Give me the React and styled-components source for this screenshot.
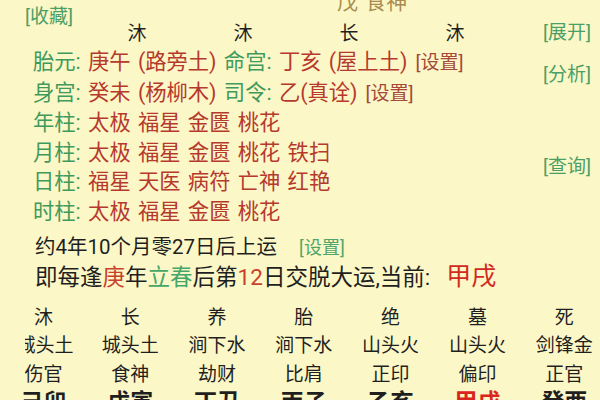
import React from 'react'
import styled, { createGlobalStyle } from 'styled-components'

const GlobalStyle = createGlobalStyle`
  html, body {
    margin: 0;
    padding: 0;
    background: #fcf7c6;
  }
  body {
    font-family: Roboto, "Noto Sans CJK SC", sans-serif;
    color: #1f1f1f;
  }
`

const Page = styled.div`
  width: 600px;
  height: 400px;
  overflow: hidden;
  background: #fcf7c6;
  display: flex;
  flex-direction: column;
`

const TopArea = styled.div`
  display: flex;
`

const Main = styled.div`
  flex: 1;
  display: flex;
  flex-direction: column;
`

const Side = styled.div`
  width: 72px;
  padding-right: 9px;
  display: flex;
  flex-direction: column;
  align-items: flex-end;
`

const Link = styled.span`
  font-size: ${p => p.$size || 19}px;
  line-height: 20px;
  color: ${p => p.$tone || '#4a9f66'};
  margin-top: ${p => p.$top || 0}px;
  margin-left: ${p => p.$left || 0}px;
  white-space: nowrap;
`

const Header = styled.div`
  height: 24px;
  display: grid;
  grid-template-columns: 312px auto;
  align-items: start;
  padding-left: 25px;
`

const TenGod = styled.span`
  font-size: 21px;
  line-height: 20px;
  margin-top: -8px;
  color: #a98c4e;
  white-space: nowrap;
  word-spacing: 2px;
`

const MarksRow = styled.div`
  display: grid;
  grid-template-columns: repeat(4, 106px);
  padding-left: 84px;
  justify-items: center;
  font-size: 19px;
  line-height: 20px;
  margin-bottom: 3px;
`

const InfoRow = styled.div`
  padding-left: 33px;
  font-size: 21.3px;
  line-height: 29.6px;
  white-space: nowrap;
  word-spacing: 2px;
`

const Label = styled.span`
  color: #3f9a5d;
`

const Value = styled.span`
  color: #b6392e;
`

const SetLink = styled.span`
  color: #a5473a;
  font-size: 19px;
  margin-left: 8px;
`

const Line = styled.div`
  padding-left: 35px;
  font-size: ${p => p.$size || 20.5}px;
  line-height: 30px;
  white-space: nowrap;
  margin-top: ${p => p.$top || 0}px;
  display: flex;
  align-items: baseline;
`

const Hl = styled.span`
  color: ${p => p.$c};
  font-size: ${p => (p.$size ? p.$size + 'px' : 'inherit')};
  margin-left: ${p => p.$gap || 0}px;
`

const Table = styled.div`
  display: grid;
  grid-template-columns: repeat(7, 86.8px);
  margin-top: 12px;
`

const Cell = styled.div`
  display: flex;
  justify-content: center;
  height: 28.5px;
  line-height: 28.5px;
  font-size: ${p => (p.$big ? 23 : 19)}px;
  font-weight: ${p => (p.$big ? 700 : 400)};
  color: ${p => (p.$red ? '#d8261c' : '#1f1f1f')};
  white-space: nowrap;
`

const Clip = styled.span`
  display: inline-flex;
  justify-content: flex-end;
  width: 48px;
  margin-left: 12px;
  overflow: hidden;
`

const stages = ['沐', '长', '养', '胎', '绝', '墓', '死']
const nayin = ['城头土', '城头土', '涧下水', '涧下水', '山头火', '山头火', '剑锋金']
const gods = ['伤官', '食神', '劫财', '比肩', '正印', '偏印', '正官']
const luck = ['己卯', '戊寅', '丁丑', '丙子', '乙亥', '甲戌', '癸酉']

const pillars = [
  ['年柱', '太极 福星 金匮 桃花'],
  ['月柱', '太极 福星 金匮 桃花 铁扫'],
  ['日柱', '福星 天医 病符 亡神 红艳'],
  ['时柱', '太极 福星 金匮 桃花'],
]

export default function App() {
  return (
    <Page>
      <GlobalStyle />
      <TopArea>
        <Main>
          <Header>
            <Link $top={7}>[收藏]</Link>
            <TenGod>戊 食神</TenGod>
          </Header>
          <MarksRow>
            <span>沐</span>
            <span>沐</span>
            <span>长</span>
            <span>沐</span>
          </MarksRow>
          <InfoRow>
            <Label>胎元:</Label> <Value>庚午 (路旁土)</Value> <Label>命宫:</Label>{' '}
            <Value>丁亥 (屋上土)</Value>
            <SetLink>[设置]</SetLink>
          </InfoRow>
          <InfoRow>
            <Label>身宫:</Label> <Value>癸未 (杨柳木)</Value> <Label>司令:</Label>{' '}
            <Value>乙(真诠)</Value>
            <SetLink>[设置]</SetLink>
          </InfoRow>
          {pillars.map(([k, v]) => (
            <InfoRow key={k}>
              <Label>{k}:</Label> <Value>{v}</Value>
            </InfoRow>
          ))}
        </Main>
        <Side>
          <Link $top={23}>[展开]</Link>
          <Link $top={22}>[分析]</Link>
          <Link $top={72}>[查询]</Link>
        </Side>
      </TopArea>
      <Line $top={5}>
        约4年10个月零27日后上运
        <Link $left={22} $size={18} $tone="#4fa66c">[设置]</Link>
      </Line>
      <Line $size={22.5}>
        即每逢<Hl $c="#c8412d">庚</Hl>年<Hl $c="#44a66a">立春</Hl>后第
        <Hl $c="#c8412d">12</Hl>日交脱大运,当前:
        <Hl $c="#d12a1f" $size={25} $gap={16}>甲戌</Hl>
      </Line>
      <Table>
        {stages.map((s, i) => (
          <Cell key={'s' + i}>{s}</Cell>
        ))}
        {nayin.map((s, i) => (
          <Cell key={'n' + i}>{i === 0 ? <Clip>{s}</Clip> : s}</Cell>
        ))}
        {gods.map((s, i) => (
          <Cell key={'g' + i}>{s}</Cell>
        ))}
        {luck.map((s, i) => (
          <Cell key={'l' + i} $big $red={s === '甲戌'}>
            {s}
          </Cell>
        ))}
      </Table>
    </Page>
  )
}
